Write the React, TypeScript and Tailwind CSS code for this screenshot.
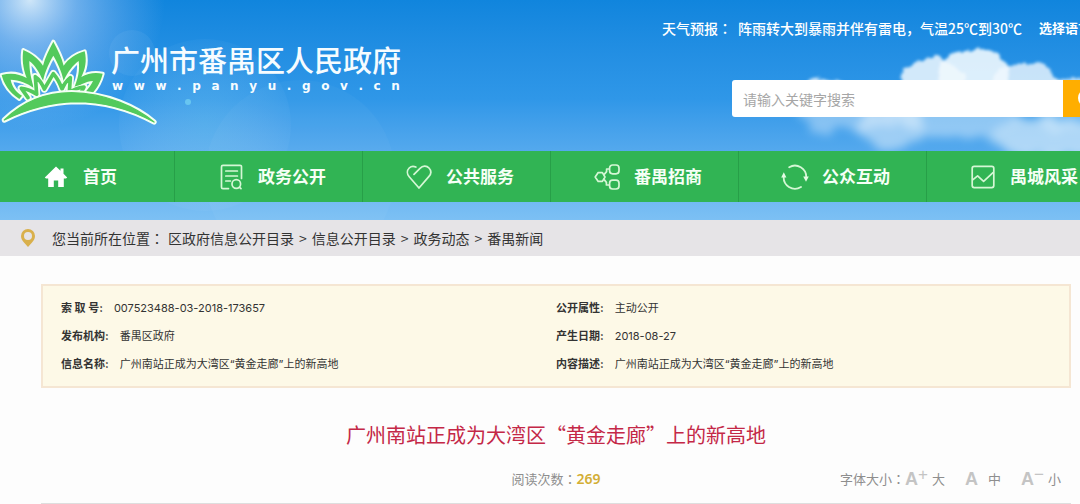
import React from "react";

const navItems = [
  { label: "首页", icon: <HomeIcon /> },
  { label: "政务公开", icon: <DocIcon /> },
  { label: "公共服务", icon: <HeartIcon /> },
  { label: "番禺招商", icon: <NodesIcon /> },
  { label: "公众互动", icon: <CycleIcon /> },
  { label: "禺城风采", icon: <PictureIcon /> },
];

const crumbs = ["区政府信息公开目录", "信息公开目录", "政务动态", "番禺新闻"];

const leftInfo = [
  ["索 取 号:", "007523488-03-2018-173657"],
  ["发布机构:", "番禺区政府"],
  ["信息名称:", "广州南站正成为大湾区“黄金走廊”上的新高地"],
];
const rightInfo = [
  ["公开属性:", "主动公开"],
  ["产生日期:", "2018-08-27"],
  ["内容描述:", "广州南站正成为大湾区“黄金走廊”上的新高地"],
];

function HomeIcon() {
  return (
    <svg viewBox="0 0 24 24" className="h-6 w-6 shrink-0" fill="#fff" aria-hidden="true">
      <path d="M12 1.5 0.8 12.4l1.2 1.2h2.2V22h5.6v-6.6h4.4V22h5.6v-8.4H22l1.2-1.2-3.7-3.7V3.6h-3v2.2z" />
    </svg>
  );
}

function DocIcon() {
  return (
    <svg viewBox="0 0 24 26" className="h-[26px] w-6 shrink-0" fill="none" stroke="#d5f7d5" strokeWidth="1.7" strokeLinecap="round" strokeLinejoin="round" aria-hidden="true">
      <path d="M22.500 14.500V2.800C22.500 1.800 22 1.400 21 1.400H3.900C2.900 1.400 2.500 1.800 2.500 2.800v20.400c0 1 .4 1.400 1.400 1.400H9.500" />
      <path d="M6.800 7h11.600M6.800 12h11.600M6.800 17h4.600" />
      <circle cx="17.300" cy="20" r="4.300" />
      <path d="M20.600 23.300l1.400 1.400" />
    </svg>
  );
}

function HeartIcon() {
  return (
    <svg viewBox="0 0 26 26" className="h-[26px] w-[26px] shrink-0" fill="none" stroke="#d5f7d5" strokeWidth="1.7" strokeLinecap="round" strokeLinejoin="round" aria-hidden="true">
      <path d="M8 10.400 14 4.400C16.600 1.600 20.600 1.400 23 4c2.400 2.600 2.200 6-.2 8.600L13 24 3.200 12.800C.8 10 .8 6.400 3.200 4 5 2.200 7.800 2 9.800 3" />
    </svg>
  );
}

function NodesIcon() {
  return (
    <svg viewBox="0 0 26 26" className="h-[26px] w-[26px] shrink-0" fill="none" stroke="#d5f7d5" strokeWidth="1.7" strokeLinejoin="round" aria-hidden="true">
      <path d="M4.200 8.600h4.200l2.600 4.400-2.600 4.400H4.200L1.200 13z" />
      <path d="M10 10.600 12.600 7.600V5h3M10 15.400l2.400 3v2.600h3" />
      <rect x="15.600" y="1" width="9.400" height="8.800" rx="3" />
      <rect x="15.600" y="16.200" width="9.400" height="8.800" rx="3" />
    </svg>
  );
}

function CycleIcon() {
  return (
    <svg viewBox="0 0 28 26" className="h-[26px] w-7 shrink-0" fill="none" stroke="#d5f7d5" strokeWidth="1.8" strokeLinecap="round" aria-hidden="true">
      <path d="M8.200 3.200A11.300 11.300 0 0 1 25.200 13.500M20 23A11.300 11.300 0 0 1 2.800 12" />
      <path d="M22.200 12.400h5.600L25 17.800zM.2 13.400h5.200L2.800 8.200z" fill="#e4fbe4" stroke="none" />
    </svg>
  );
}

function PictureIcon() {
  return (
    <svg viewBox="0 0 24 24" className="h-6 w-6 shrink-0" fill="none" stroke="#d5f7d5" strokeWidth="1.7" strokeLinecap="round" strokeLinejoin="round" aria-hidden="true">
      <rect x="1.200" y="1.400" width="21.600" height="21.200" rx="2" />
      <path d="M2 14.600 6.600 10.800l6 5.600L22 7.600" />
    </svg>
  );
}

const petals =
  "M58 210C26 190 10 160 5 138C32 130 58 134 80 147C68 116 66 88 70 63C96 74 116 90 129 110C135 85 148 60 160 38C172 60 185 85 191 110C205 90 228 74 254 67C261 95 256 122 244 144C264 132 286 130 308 134C302 158 292 176 276 194L254 192C266 178 275 166 279 156C258 157 238 168 219 184C234 152 240 124 236 96C220 108 203 128 191 156C184 124 172 100 160 80C148 100 136 124 129 156C118 130 106 110 88 96C88 122 92 146 102 178C82 162 58 153 32 152C36 172 46 188 66 200Z";
const innerPetals = "M84 206L64 178Q88 180 110 196L106 143Q122 154 133 180L160 134Q176 152 186 180Q194 160 211 146L208 190Q226 178 252 174L240 196";
const arc = "M13 273C80 208 150 191 215 191C320 193 410 235 462 279C390 240 310 218 226 218C150 220 80 240 13 273Z";

function Lotus() {
  return (
    <svg viewBox="0 24 480 270" className="h-[90px] w-40 shrink-0" aria-hidden="true">
      <g strokeLinejoin="round" strokeLinecap="round">
        <path d={petals} fill="#f4fff4" stroke="#f4fff4" strokeWidth="12" />
        <path d={innerPetals} fill="none" stroke="#f4fff4" strokeWidth="22" />
        <path d={petals} fill="#53ca5c" />
        <path d={innerPetals} fill="none" stroke="#f4fff4" strokeWidth="17" />
        <path d={innerPetals} fill="none" stroke="#53ca5c" strokeWidth="11" />
        <path d={arc} fill="#53ca5c" stroke="#f4fff4" strokeWidth="16" />
        <path d={arc} fill="#53ca5c" stroke="#53ca5c" strokeWidth="4" />
      </g>
    </svg>
  );
}

function Sky() {
  return (
    <div className="absolute inset-0 overflow-hidden bg-linear-to-b from-[#1085dd] via-[#2f97e8] via-45% to-[#7cc0f4]" aria-hidden="true">
      <svg width="520" height="220" viewBox="0 0 520 220" className="absolute top-0 left-0">
        <defs>
          <radialGradient id="sun">
            <stop offset="0" stopColor="#fff" stopOpacity=".8" />
            <stop offset=".35" stopColor="#c3d6fa" stopOpacity=".5" />
            <stop offset=".75" stopColor="#9cc0f4" stopOpacity=".22" />
            <stop offset="1" stopColor="#9cc4f4" stopOpacity="0" />
          </radialGradient>
          <radialGradient id="flare">
            <stop offset="0" stopColor="#a5e6f0" stopOpacity=".2" />
            <stop offset="1" stopColor="#fff" stopOpacity=".03" />
          </radialGradient>
        </defs>
        <ellipse cx="30" cy="0" rx="135" ry="130" fill="url(#sun)" />
        <circle cx="132" cy="53" r="23" fill="#fff" opacity=".05" />
        <circle cx="205" cy="125" r="86" fill="url(#flare)" />
        <circle cx="300" cy="175" r="95" fill="#fff" opacity=".03" />
        <circle cx="188" cy="102" r="3" fill="#7fdcf5" opacity=".6" />
      </svg>
      <svg width="330" height="220" viewBox="750 0 330 220" className="absolute top-0 right-0">
        <defs>
          <filter id="puff" x="-10%" y="-20%" width="130%" height="140%">
            <feTurbulence type="fractalNoise" baseFrequency=".07" numOctaves="5" seed="8" />
            <feDisplacementMap in="SourceGraphic" scale="14" xChannelSelector="R" yChannelSelector="G" result="d" />
            <feGaussianBlur in="d" stdDeviation="1.600" />
          </filter>
          <filter id="haze" x="-20%" y="-40%" width="150%" height="180%">
            <feTurbulence type="fractalNoise" baseFrequency=".04" numOctaves="4" seed="3" />
            <feDisplacementMap in="SourceGraphic" scale="26" xChannelSelector="R" yChannelSelector="G" result="d" />
            <feGaussianBlur in="d" stdDeviation="5" />
          </filter>
        </defs>
        <g filter="url(#puff)" fill="#f0f8fe">
          <ellipse cx="932" cy="78" rx="30" ry="20" opacity=".85" />
          <ellipse cx="974" cy="75" rx="36" ry="27" opacity=".9" />
          <ellipse cx="1024" cy="80" rx="32" ry="18" opacity=".8" />
          <ellipse cx="1072" cy="88" rx="34" ry="12" opacity=".7" />
          <ellipse cx="828" cy="88" rx="22" ry="10" opacity=".8" />
        </g>
        <g filter="url(#haze)" fill="#f0f8fe">
          <ellipse cx="850" cy="116" rx="52" ry="14" opacity=".4" />
          <ellipse cx="890" cy="126" rx="32" ry="24" opacity=".5" />
          <ellipse cx="960" cy="120" rx="60" ry="18" opacity=".45" />
          <ellipse cx="1050" cy="138" rx="55" ry="20" opacity=".6" />
          <ellipse cx="1066" cy="118" rx="34" ry="14" opacity=".3" />
        </g>
      </svg>
    </div>
  );
}

function InfoList({ rows }: { rows: string[][] }) {
  return (
    <dl className="flex-1">
      {rows.map(([k, v]) => (
        <div key={k} className="flex h-7 items-center gap-[11px]">
          <dt className="font-bold whitespace-pre">{k}</dt>
          <dd>{v}</dd>
        </div>
      ))}
    </dl>
  );
}

function Colon() {
  return <span className="font-['Noto_Sans_CJK_TC',sans-serif]">：</span>;
}

function SizeMark({ sign }: { sign?: string }) {
  return (
    <span className="flex items-start font-['Liberation_Sans',sans-serif] text-[18px] leading-5 font-bold text-[#c4c4c4]">
      A{sign && <span className="text-[17px] leading-3 font-normal">{sign}</span>}
    </span>
  );
}

export default function App() {
  return (
    <div className="overflow-hidden bg-[#fdfdfd] font-['Noto_Sans_CJK_SC',sans-serif] text-[#333]">
      <header className="relative overflow-hidden pb-[18px]">
        <Sky />
        <div className="relative flex h-[151px] justify-between">
          <div className="flex items-start pt-[37px]">
            <Lotus />
            <div className="-ml-[49px] pt-2 text-[#f6fcff]">
              <div className="font-['Liberation_Sans','Noto_Sans_CJK_SC',sans-serif] text-[29px] leading-[34px] font-medium whitespace-nowrap">广州市番禺区人民政府</div>
              <div className="flex justify-between px-px font-['DejaVu_Sans',sans-serif] text-[12px] leading-[14px] font-bold" aria-label="www.panyu.gov.cn">
                {"www.panyu.gov.cn".split("").map((c, i) => (
                  <span key={i}>{c}</span>
                ))}
              </div>
            </div>
          </div>
          <div className="w-[418px] shrink-0 overflow-hidden pt-[18px]">
            <div className="flex h-5 items-center text-[14px] leading-5 font-medium whitespace-nowrap text-white">
              <span className="w-[76px] shrink-0">天气预报<Colon /></span>
              <span>阵雨转大到暴雨并伴有雷电，气温25℃到30℃</span>
              <button type="button" className="ml-[17px] shrink-0 text-[13px] font-bold">选择语言</button>
            </div>
            <form className="mt-[42px] flex pl-[70px]" onSubmit={(e) => e.preventDefault()}>
              <input
                type="text"
                aria-label="请输入关键字搜索"
                placeholder="请输入关键字搜索"
                className="h-[37px] w-[331px] shrink-0 rounded-l-[3px] bg-white px-[11px] text-[14px] outline-none placeholder:text-[#a6a6a6]"
              />
              <button type="submit" aria-label="搜索" className="flex h-[37px] w-[60px] shrink-0 items-center bg-[#ffae00] pl-[14px]">
                <svg viewBox="0 0 24 24" className="h-6 w-6" fill="none" stroke="#fff" strokeWidth="3" aria-hidden="true">
                  <circle cx="10" cy="11" r="7.500" />
                  <path d="m16 17 6 6" />
                </svg>
              </button>
            </form>
          </div>
        </div>
        <nav className="relative bg-[#31b454]">
          <ul className="flex">
            {navItems.map((item, i) => (
              <li key={item.label} className={i === 0 ? "w-[175px] shrink-0 border-r border-[#279f48]" : "w-[188px] shrink-0 border-r border-[#279f48]"}>
                <a href="#" className="flex h-[51px] items-center gap-[15px] pl-11 text-[17px] font-bold text-[#f6fff6]">
                  <span className="flex w-6 shrink-0 justify-center">{item.icon}</span>
                  <span className="pb-0.5 whitespace-nowrap">{item.label}</span>
                </a>
              </li>
            ))}
          </ul>
        </nav>
      </header>

      <nav aria-label="位置" className="flex h-9 items-center bg-[#e6e4e7] pl-[21px] text-[14px] whitespace-nowrap">
        <svg viewBox="0 0 14 18" className="mr-[17px] h-[18px] w-[14px] shrink-0" aria-hidden="true">
          <path fillRule="evenodd" d="M7 0a7 7 0 0 1 7 7c0 3-1.500 4.500-3.200 6.800L7 18l-3.800-4.200C1.500 11.500 0 10 0 7a7 7 0 0 1 7-7zm0 3a4 4 0 1 0 0 8 4 4 0 0 0 0-8z" fill="#d9b04c" />
        </svg>
        <span className="w-[116px] shrink-0">您当前所在位置<Colon /></span>
        <ol className="flex gap-[5px]">
          {crumbs.map((c, i) => (
            <li key={c} className="flex gap-[5px]">
              {i > 0 && <span>&gt;</span>}
              <a href="#">{c}</a>
            </li>
          ))}
        </ol>
      </nav>

      <main className="mr-[9px] ml-[41px] pt-7">
        <section className="flex border-2 border-[#f5e6d3] bg-[#fdf9e7] px-[18px] py-2 font-['Inter','Noto_Sans_CJK_SC',sans-serif] text-[11px]">
          <InfoList rows={leftInfo} />
          <InfoList rows={rightInfo} />
        </section>
        <h1 className="mt-8 text-center text-[20px] leading-[30px] text-[#c42847]">广州南站正成为大湾区“黄金走廊”上的新高地</h1>
        <div className="mt-[19px] grid grid-cols-[1fr_auto_1fr] items-center border-b border-[#dedede] pb-[14px] text-[13px] leading-5 text-[#8e8e8e]">
          <span />
          <p>
            阅读次数<Colon /><span className="font-['Noto_Sans',sans-serif] text-[14px] font-semibold text-[#d3ae35]">269</span>
          </p>
          <div className="flex items-center justify-end pr-[10px]">
            <span>字体大小<Colon /></span>
            <button type="button" className="flex items-center">
              <SizeMark sign="+" />
              <span className="ml-1">大</span>
            </button>
            <button type="button" className="ml-5 flex items-center">
              <SizeMark />
              <span className="ml-[10px]">中</span>
            </button>
            <button type="button" className="ml-5 flex items-center">
              <SizeMark sign="−" />
              <span className="ml-1">小</span>
            </button>
          </div>
        </div>
      </main>
    </div>
  );
}
